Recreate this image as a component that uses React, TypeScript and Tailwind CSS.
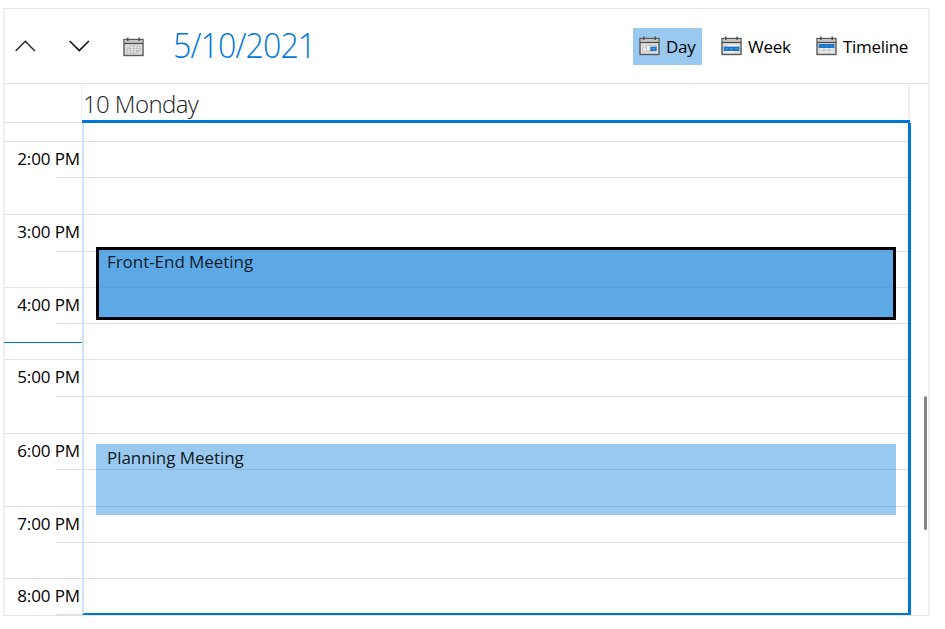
import type { ReactNode } from 'react';

type Slot = { height: string; label?: string; half?: boolean };

// Each slot is half an hour and carries its line at the bottom
const slots: Slot[] = [
  { height: 'h-[19px]' },
  { height: 'h-9', label: '2:00 PM', half: true },
  { height: 'h-[37px]' },
  { height: 'h-[37px]', label: '3:00 PM', half: true },
  { height: 'h-9' },
  { height: 'h-9', label: '4:00 PM', half: true },
  { height: 'h-9' },
  { height: 'h-[37px]', label: '5:00 PM', half: true },
  { height: 'h-[37px]' },
  { height: 'h-9', label: '6:00 PM', half: true },
  { height: 'h-[37px]' },
  { height: 'h-9', label: '7:00 PM', half: true },
  { height: 'h-9' },
  { height: 'h-9', label: '8:00 PM', half: true },
];

function CalendarIcon({ children }: { children?: ReactNode }) {
  return (
    <svg width="21" height="20" viewBox="0 0 21 20" className="shrink-0">
      <rect x="1" y="2.5" width="19" height="16" fill="#dcdcdc" stroke="#595959" strokeWidth="1.4" />
      <rect x="1.7" y="3" width="17.6" height="3" fill="#c4c4c4" />
      <path d="M1 6.5h19" stroke="#4a4a4a" strokeWidth="1.2" />
      <path d="M4.8 0.5v3.4M16.2 0.5v3.4" stroke="#4a4a4a" strokeWidth="1.4" />
      {children}
    </svg>
  );
}

function MonthGrid() {
  return (
    <>
      <path d="M7 9h10v4.6H14V16H4v-4.6h3z" fill="#f2f2f2" stroke="#b3b3b3" strokeWidth="0.8" />
      <path d="M4 11.4h13M4 13.7h13M7.3 11.4V16M10.6 9v7M13.9 9v7" stroke="#b3b3b3" strokeWidth="0.8" />
    </>
  );
}

function DayIcon() {
  return (
    <CalendarIcon>
      <path d="M7.5 9.6H17v5.4H3.6v-2.9h3.9z" fill="#fafafa" stroke="#b8b8b8" strokeWidth="0.8" />
      <path d="M7.5 12.1V15M11 9.6V15" stroke="#b8b8b8" strokeWidth="0.8" />
      <rect x="11.4" y="10.6" width="6.2" height="4.4" fill="#1b75c9" />
      <rect x="13" y="12.2" width="3" height="1.2" fill="#5ba3e0" />
    </CalendarIcon>
  );
}

function WeekIcon() {
  return (
    <CalendarIcon>
      <path d="M7.5 8.8H17v1.8H7.5zM4 15h9.5v1.4H4z" fill="#fafafa" />
      <rect x="2.6" y="10.6" width="15.8" height="4.4" fill="#1b75c9" />
      <path d="M4.5 12.8h2.4M9 12.8h3M14 12.8h2.6" stroke="#5ba3e0" strokeWidth="1" />
    </CalendarIcon>
  );
}

function TimelineIcon() {
  return (
    <CalendarIcon>
      <path d="M4 8h13v8.5H4z" fill="#f0f0f0" />
      <rect x="2.6" y="8" width="15.8" height="4" fill="#1b75c9" />
      <path d="M4.5 9.9h2.4M9 9.9h3M14 9.9h2.6" stroke="#3d8fd6" strokeWidth="1" />
      <path d="M4 14.2h13M8 12v4.5M13 12v4.5" stroke="#b8b8b8" strokeWidth="0.8" />
    </CalendarIcon>
  );
}

function Toolbar() {
  return (
    <header className="flex h-[75px] items-center border-b border-[#e2e2e2]">
      <button className="ml-[10px]" aria-label="Previous">
        <svg width="21" height="12" viewBox="0 0 21 12" fill="none" stroke="#222" strokeWidth="1.4">
          <path d="M0.7 10.9L10.3 1.2l9.6 9.7" />
        </svg>
      </button>
      <button className="ml-[33px]" aria-label="Next">
        <svg width="21" height="12" viewBox="0 0 21 12" fill="none" stroke="#111" strokeWidth="1.6">
          <path d="M0.7 1l9.6 9.6L19.9 1" />
        </svg>
      </button>
      <button className="ml-[33px] pt-px" aria-label="Calendar">
        <CalendarIcon>
          <MonthGrid />
        </CalendarIcon>
      </button>
      <h1 className="ml-[29px] origin-left scale-x-92 pb-[4px] text-[35px] leading-none font-light tracking-[-1px] text-[#0078d7]">
        5/10/2021
      </h1>
      <nav className="mr-[10px] ml-auto flex items-center text-[17px] tracking-[-0.3px]">
        <button className="flex h-[37px] w-[69px] items-center gap-[6px] bg-[#99c9ef] pl-[6px]">
          <DayIcon />
          <span className="pt-[2px]">Day</span>
        </button>
        <button className="ml-[19px] flex h-[37px] w-[76px] items-center gap-[6px]">
          <WeekIcon />
          <span className="pt-[2px]">Week</span>
        </button>
        <button className="ml-[19px] flex h-[37px] w-[102px] items-center gap-[6px]">
          <TimelineIcon />
          <span className="pt-[2px]">Timeline</span>
        </button>
      </nav>
    </header>
  );
}

export default function App() {
  return (
    <div className="h-[629px] bg-white pt-2 pl-[3px] font-['Open_Sans',sans-serif] text-black">
      <div className="h-[608px] w-[927px] border-x-2 border-y border-x-[#f0f0f0] border-y-[#e2e2e2]">
        <Toolbar />

        {/* Day header */}
        <div className="flex h-[39px]">
          <div className="w-[77px] border-r border-b border-r-[#f0f0f0] border-b-[#e2e2e2]" />
          <div className="w-[828px] border-b-[3px] border-b-[#0078d7]">
            <div className="h-full border-r-2 border-[#f0f0f0] pl-px">
              <span className="block text-2xl leading-[40px] font-light tracking-[-0.6px] whitespace-nowrap text-[#222]">
                10 Monday
              </span>
            </div>
          </div>
        </div>

        <div className="flex h-[492px]">
          {/* Time ruler */}
          <div className="relative w-[77px]">
            {slots.map((slot, i) => (
              <div key={i} className={`${slot.height} flex flex-col`}>
                <span className="h-0 flex-1 pr-[2px] text-right text-[17px] leading-[33px] tracking-[-0.1px]">
                  {slot.label}
                </span>
                <span className={slot.half ? 'ml-[51px] h-px bg-[#e2e2e2]' : 'h-px bg-[#e2e2e2]'} />
              </div>
            ))}
            <div className="absolute top-[219px] left-[-1px] h-px w-[78px] bg-[#0078d7]" />
          </div>

          {/* Day column */}
          <div className="relative w-[829px] border-r-[3px] border-b-2 border-l-2 border-r-[#0078d7] border-b-[#0078d7] border-l-[#cfe3f4]">
            <div className="h-full overflow-hidden">
              {slots.map((slot, i) => (
                <div key={i} className={`${slot.height} border-b border-[#e2e2e2]`} />
              ))}
            </div>
            <div className="absolute top-[124px] left-[12px] h-[73px] w-[800px] border-[3px] border-black bg-[#0078d7]/64 pl-2 text-[17px] leading-[24px] tracking-[-0.05px] text-black/85">
              Front-End Meeting
            </div>
            <div className="absolute top-[321px] left-[12px] h-[71px] w-[800px] bg-[#0078d7]/40 pl-[11px] text-[17px] leading-[28px] tracking-[-0.05px] text-black/90">
              Planning Meeting
            </div>
          </div>

          {/* Scrollbar */}
          <div className="mr-px ml-auto w-[3px] pt-[273px]">
            <div className="h-[134px] w-[3px] rounded-full bg-[#858585]" />
          </div>
        </div>
      </div>
    </div>
  );
}
